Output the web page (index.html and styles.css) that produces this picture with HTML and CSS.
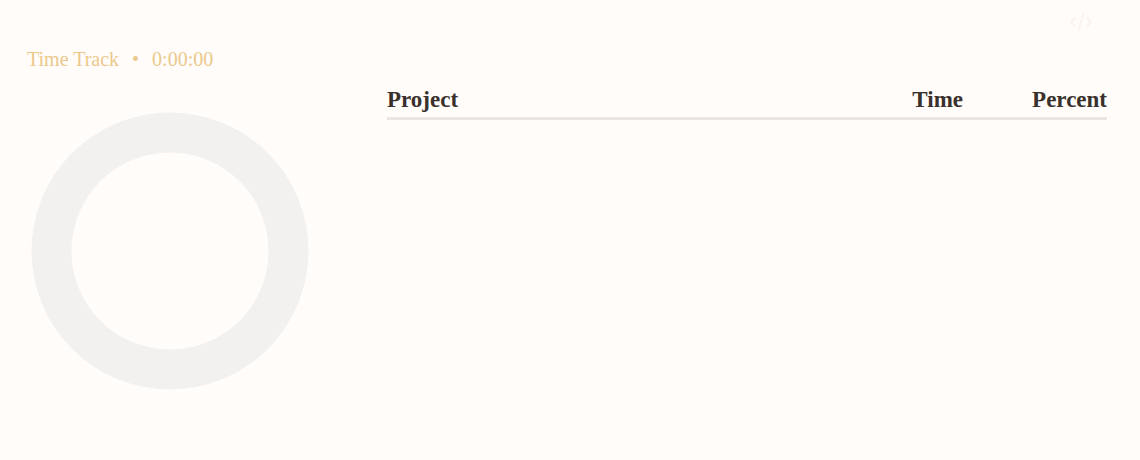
FILE: index.html
```html
<!DOCTYPE html>
<html lang="en">
<head>
<meta charset="utf-8">
<title>Time Track</title>
<link rel="stylesheet" href="styles.css">
</head>
<body>
<div class="page">
  <div class="topbar">
    <button class="icon-btn" aria-label="Source">
      <svg width="24" height="24" viewBox="0 0 24 24" fill="none" stroke="currentColor" stroke-width="2" stroke-linecap="round" stroke-linejoin="round"><path d="m18 16 4-4-4-4"/><path d="m6 8-4 4 4 4"/><path d="m14.5 4-5 16"/></svg>
    </button>
  </div>
  <div class="main">
    <div class="left">
      <div class="title">Time Track <span class="dot">•</span> 0:00:00</div>
      <div class="chart">
        <svg width="278" height="278" viewBox="0 0 278 278"><circle cx="139" cy="139" r="118.5" fill="none" stroke="#f3f1ef" stroke-width="40"/></svg>
      </div>
    </div>
    <div class="table">
      <div class="thead">
        <div class="col-project">Project</div>
        <div class="col-time">Time</div>
        <div class="col-percent">Percent</div>
      </div>
    </div>
  </div>
</div>
</body>
</html>
```
FILE: styles.css
```css
html, body {
  margin: 0;
  padding: 0;
  background: #fffcf9;
  height: 100%;
}
.page {
  padding: 0 33px 0 27px;
  font-family: "Liberation Serif", "Times New Roman", serif;
}
.topbar {
  display: flex;
  justify-content: flex-end;
  padding-top: 10px;
  padding-right: 14px;
  height: 24px;
}
.icon-btn {
  border: 0;
  background: none;
  padding: 0;
  color: #f8f3ee;
  width: 24px;
  height: 24px;
  display: flex;
}
.main {
  display: flex;
}
.left {
  width: 360px;
  flex-shrink: 0;
  padding-top: 14px;
}
.title {
  font-size: 20px;
  color: #ebc98c;
  line-height: 23px;
}
.dot {
  margin: 0 8px;
}
.chart {
  margin-top: 41px;
  padding-left: 4px;
}
.chart svg {
  display: block;
}
.table {
  flex: 1;
  padding-top: 53px;
}
.thead {
  display: flex;
  font-size: 23px;
  font-weight: bold;
  color: #3a312d;
  line-height: 26px;
  padding-bottom: 4px;
  border-bottom: 3px solid #ebe6e2;
}
.col-project {
  flex: 1;
}
.col-time {
  width: 120px;
  text-align: right;
}
.col-percent {
  width: 144px;
  text-align: right;
}
```
